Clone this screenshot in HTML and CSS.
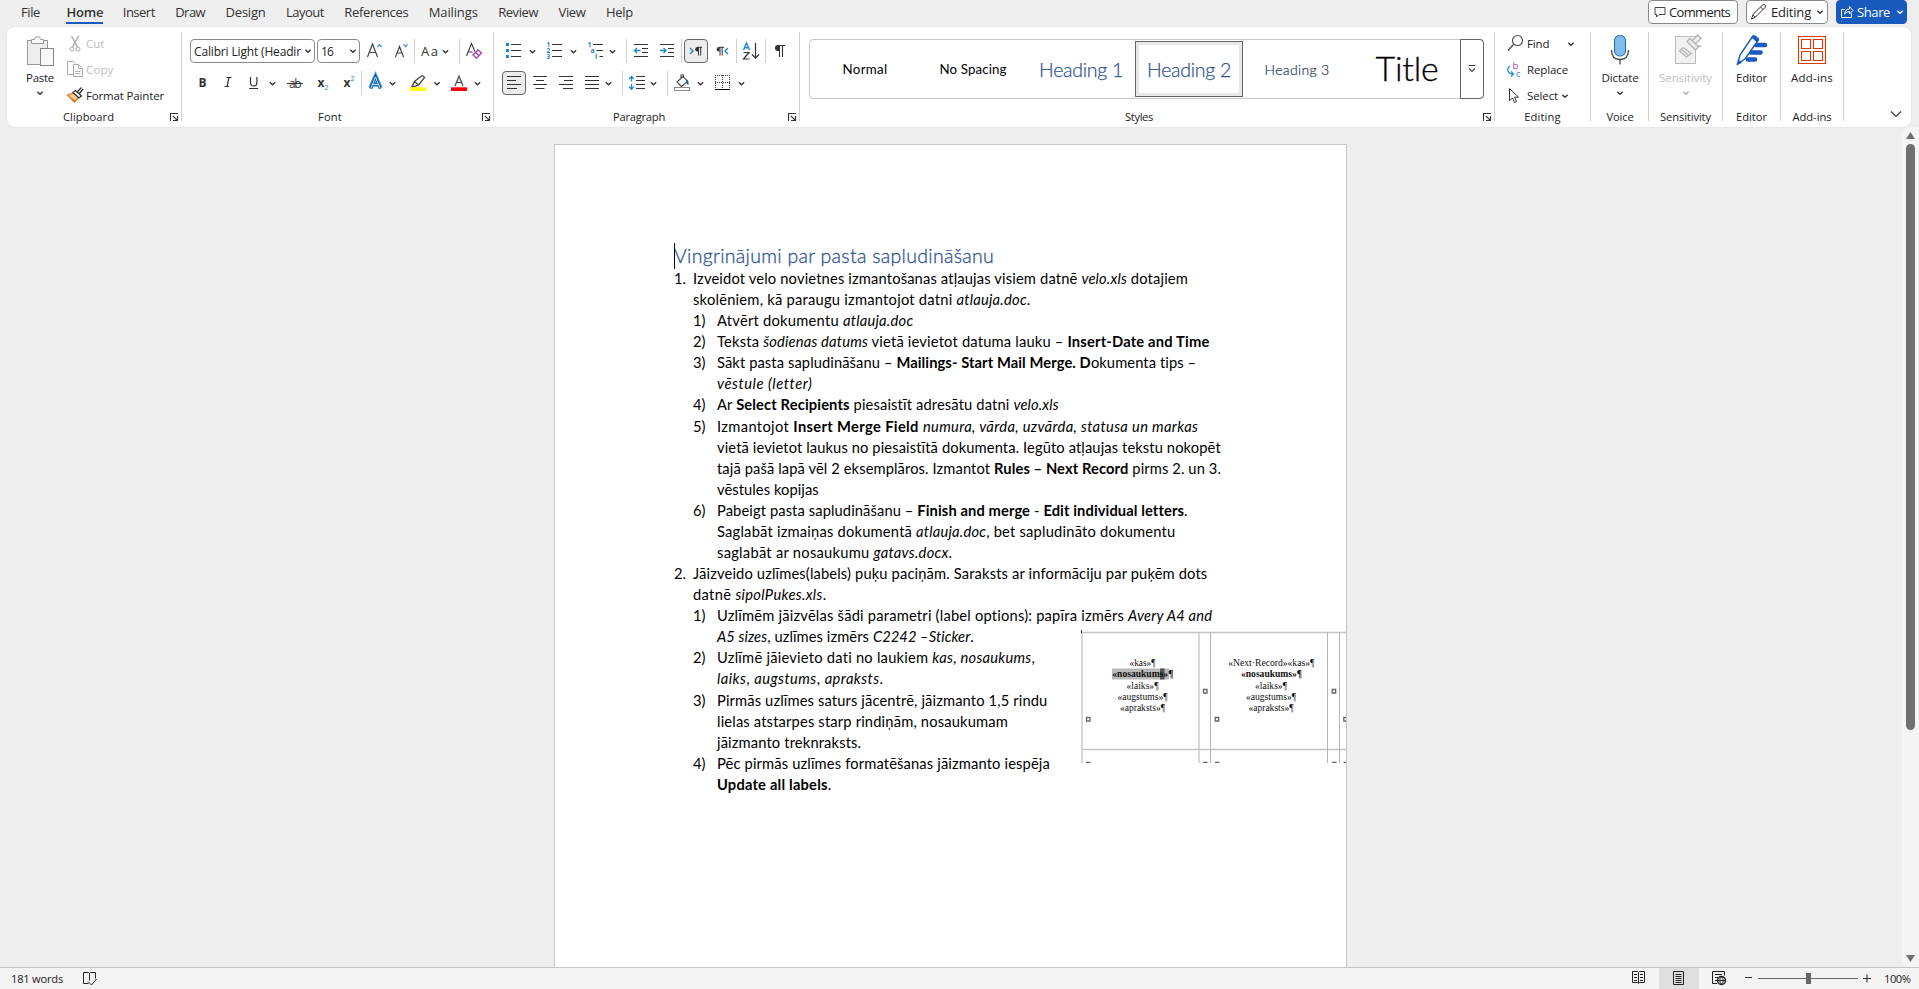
FILE: index.html
```html
<!DOCTYPE html>
<html lang="lv">
<head>
<meta charset="utf-8">
<title>Document</title>
<link rel="stylesheet" href="styles.css">
</head>
<body>
<svg class="defs" width="0" height="0" aria-hidden="true">
  <defs>
    <path id="chev" d="M-2.7-1.3L0 1.3L2.7-1.3" fill="none" stroke="#333" stroke-width="1.3"/>
    <path id="launch" d="M.5 8V.5H8M2.8 2.8L7 7M7.5 3V7.5H3" fill="none" stroke="#333" stroke-width="1.1"/>
  </defs>
</svg>

<header class="tabs">
  <nav class="tablist">
    <a class="tab"><span data-w="19">File</span></a>
    <a class="tab active"><span data-w="37">Home</span></a>
    <a class="tab"><span data-w="32">Insert</span></a>
    <a class="tab"><span data-w="30">Draw</span></a>
    <a class="tab"><span data-w="40">Design</span></a>
    <a class="tab"><span data-w="38">Layout</span></a>
    <a class="tab"><span data-w="64">References</span></a>
    <a class="tab"><span data-w="49">Mailings</span></a>
    <a class="tab"><span data-w="40">Review</span></a>
    <a class="tab"><span data-w="27">View</span></a>
    <a class="tab"><span data-w="27">Help</span></a>
  </nav>
  <div class="actions">
    <button class="action comments"><svg viewBox="1652 4 16 16" width="16" height="16"><path d="M1654 7.5h10v7h-6l-2.5 2.5v-2.500h-1.500z" fill="none" stroke="#444"/></svg><span data-w="61">Comments</span></button>
    <button class="action editing"><svg viewBox="1750 3 18 18" width="18" height="18"><path d="M1751.500 19l1.500-4.500 9.500-9.500q1.500-1 2.500 0t0 2.500l-9.500 9.500zM1760.500 7l2.500 2.500M1753 15l2 2" fill="none" stroke="#333"/></svg><span data-w="40">Editing</span><svg viewBox="-6 -6 12 12" width="12" height="12"><use href="#chev"/></svg></button>
    <button class="action share"><svg viewBox="1839 3 16 18" width="16" height="18"><path d="M1845 9.500h-3.500v8h10v-4M1844.500 14q.5-5 5-5v-2.500l3.500 4-3.500 3.500v-2.500q-3 0-5 2.500z" fill="none" stroke="#fff"/></svg><span data-w="33">Share</span><svg class="light" viewBox="-6 -6 12 12" width="12" height="12"><use href="#chev"/></svg></button>
  </div>
</header>

<section class="ribbon">
  <div class="group clipboard">
    <div class="body">
      <button class="big paste">
        <svg viewBox="25 32 34 36" width="34" height="36"><rect x="29.500" y="40.500" width="20" height="24" fill="#eee" stroke="#999"/><path d="M33.500 43.500v-4h3q0-3 3-3t3 3h3v4z" fill="#fafafa" stroke="#999"/><rect x="42.500" y="48.500" width="13" height="17" fill="#f8f8f8" stroke="#888"/></svg>
        <span data-w="28">Paste</span>
        <svg viewBox="-6 -5 12 10" width="12" height="10"><use href="#chev"/></svg>
      </button>
      <div class="stack">
        <button class="small off"><svg viewBox="65 31 21 26" width="21" height="26"><path d="M71.500 36l6 11M78.500 36l-6 11" stroke="#aaa" stroke-width="1.400" fill="none"/><circle cx="72" cy="49" r="2" fill="none" stroke="#aaa"/><circle cx="78" cy="49" r="2" fill="none" stroke="#aaa"/></svg><span data-w="18.500">Cut</span></button>
        <button class="small off"><svg viewBox="65 57 21 26" width="21" height="26"><path d="M73 74.500h-5.500v-13h6l2 2M73.500 64.500h5l4 4v8h-9zM78.500 64.500v4h4M75.500 71.500h5M75.500 73.500h5" fill="none" stroke="#aaa"/></svg><span data-w="27.500">Copy</span></button>
        <button class="small"><svg viewBox="65 83 21 26" width="21" height="26"><path d="M67.500 95l6-2 5 4.500-4 4.500z" fill="#f9c89a" stroke="#e07b1a" stroke-width="1.300"/><path d="M73 102l2.500-1.500-4-2.500z" fill="#e07b1a"/><path d="M73 92.500l2.500-2 6 5.500-2.500 2zM77.500 91.500l4-4M79.500 93.500l3.500-4.500" fill="#fff" stroke="#333" stroke-width="1.300"/></svg><span data-w="78">Format Painter</span></button>
      </div>
    </div>
    <div class="caption"><span data-w="51">Clipboard</span><svg class="launcher" width="9" height="9"><use href="#launch"/></svg></div>
  </div>

  <div class="group font">
    <div class="body rows">
      <div class="row first">
        <div class="combo name"><span data-w="107">Calibri Light (Headir</span><svg viewBox="-6 -6 12 12" width="12" height="12"><use href="#chev"/></svg></div>
        <div class="combo size"><span data-w="12">16</span><svg viewBox="-6 -6 12 12" width="12" height="12"><use href="#chev"/></svg></div>
        <svg viewBox="361 39 26 24" width="26" height="24"><path d="M367.500 57l5-13 5 13M369.200 52.500h6.600" fill="none" stroke="#444" stroke-width="1.200"/><path d="M377.500 47l2-2.300 2 2.300" fill="none" stroke="#2b88d8" stroke-width="1.200"/></svg>
        <svg viewBox="387 39 27 24" width="27" height="24"><path d="M395.500 57l4-10.500 4 10.500M397 53h5.300" fill="none" stroke="#444" stroke-width="1.200"/><path d="M403.500 44.300l2 2.300 2-2.300" fill="none" stroke="#2b88d8" stroke-width="1.200"/></svg>
        <i class="sep"></i>
        <svg viewBox="415 39 44 24" width="44" height="24"><text x="421" y="56" font-size="13" textLength="17">Aa</text><use href="#chev" x="445.500" y="51.500"/></svg>
        <i class="sep"></i>
        <svg viewBox="460 39 28 24" width="28" height="24"><path d="M466.500 56l5-12.500 3.500 8M468.200 52h4.500" fill="none" stroke="#444" stroke-width="1.200"/><path d="M473 55l5-5 3.500 3-5 5.200zM475.500 52.500l3.500 3.200" fill="#fff" stroke="#a33cae" stroke-width="1.300"/></svg>
      </div>
      <div class="row">
        <svg viewBox="190 71 24 24" width="24" height="24"><text x="198.500" y="87" font-weight="700" font-size="12">B</text></svg>
        <svg viewBox="214 71 26 24" width="26" height="24"><path d="M226.500 77.500h5M224.500 86.500h4.500M229 77.500l-2 9" fill="none" stroke="#333" stroke-width="1.200"/></svg>
        <svg viewBox="240 71 42 24" width="42" height="24"><path d="M250.500 77v5.500q0 3.500 3.200 3.500t3.200-3.500v-5.500M249 88.500h9" fill="none" stroke="#333" stroke-width="1.200"/><use href="#chev" x="272.500" y="83.500"/></svg>
        <svg viewBox="282 71 26 24" width="26" height="24"><text x="289" y="87.500" font-size="12" textLength="12.500" fill="#555">ab</text><path d="M287 83.500h16" stroke="#333"/></svg>
        <svg viewBox="308 71 26 24" width="26" height="24"><text x="317.500" y="86.500" font-size="12" font-weight="700">x</text><text x="324.500" y="90" font-size="7" class="blue">2</text></svg>
        <svg viewBox="334 71 27 24" width="27" height="24"><text x="343.500" y="86.500" font-size="12" font-weight="700">x</text><text x="350.500" y="81" font-size="7" class="blue">2</text></svg>
        <i class="sep"></i>
        <svg viewBox="362 71 42 24" width="42" height="24"><path d="M370.500 88l5-11.500 5 11.500M372.500 84.500h6" fill="none" stroke="#4ba3e3" stroke-width="4.500"/><path d="M370.500 88.500l5-12 5 12M372.500 84.500h6" fill="none" stroke="#0f5aa5" stroke-width="2.600"/><path d="M371 88l4.500-11 4.500 11M372.500 84.500h6" fill="none" stroke="#fff" stroke-width=".8"/><use href="#chev" x="392.500" y="83.500"/></svg>
        <svg viewBox="404 71 41 24" width="41" height="24"><path d="M412 86.500l2.500-5 7-5.500q2-.5 3 1.500l-5.500 7-4 2zM414.500 81.500l4 3.500M412 86.500h3" fill="none" stroke="#444" stroke-width="1.300"/><rect x="410" y="87.300" width="16" height="3.700" fill="#ff0"/><use href="#chev" x="437" y="83.500"/></svg>
        <svg viewBox="445 71 42 24" width="42" height="24"><path d="M455 86l4-10 4 10M456.500 82.500h5" fill="none" stroke="#444" stroke-width="1.200"/><rect x="451" y="87.300" width="16" height="3.700" fill="#f00"/><use href="#chev" x="477.500" y="83.500"/></svg>
      </div>
    </div>
    <div class="caption"><span data-w="24">Font</span><svg class="launcher" width="9" height="9"><use href="#launch"/></svg></div>
  </div>

  <div class="group para">
    <div class="body rows">
      <div class="row first">
        <svg viewBox="502 39 38 24" width="38" height="24"><path d="M506 43h3v3h-3zM506 49h3v3h-3zM506 55h3v3h-3z" fill="#1e88d0"/><path d="M511 44.500h10M511 50.500h10M511 56.500h10" stroke="#333"/><use href="#chev" x="532.500" y="51.500"/></svg>
        <svg viewBox="540 39 41 24" width="41" height="24"><g font-size="6.500" font-weight="700" class="blue"><text x="546.500" y="47">1</text><text x="546.500" y="53">2</text><text x="546.500" y="59">3</text></g><path d="M552 44.500h10M552 50.500h10M552 56.500h10" stroke="#333"/><use href="#chev" x="573.500" y="51.500"/></svg>
        <svg viewBox="581 39 45 24" width="45" height="24"><g font-size="7" font-weight="700" class="blue"><text x="587.500" y="47">1</text><text x="590.500" y="53">a</text><text x="595" y="59">i</text></g><path d="M593 44.500h10M596.500 50.500h6.500M599.500 56.500h3.500" stroke="#333"/><use href="#chev" x="612.500" y="51.500"/></svg>
        <i class="sep"></i>
        <svg viewBox="627 39 27 24" width="27" height="24"><path d="M634 44.500h14M642 48.500h6M642 52.500h6M634 56.500h14" stroke="#333"/><path d="M640.500 50.500h-6M637 48l-2.500 2.500 2.500 2.500" fill="none" stroke="#1e88d0" stroke-width="1.300"/></svg>
        <svg viewBox="654 39 27 24" width="27" height="24"><path d="M660 44.500h14M668 48.500h6M668 52.500h6M660 56.500h14" stroke="#333"/><path d="M660 50.500h6M663.500 48l2.500 2.500-2.500 2.500" fill="none" stroke="#1e88d0" stroke-width="1.300"/></svg>
        <i class="sep"></i>
        <svg class="on ltr" viewBox="684 39 24 24" width="24" height="24"><path d="M690 48l3 3-3 3" fill="none" stroke="#1e88d0" stroke-width="1.400"/><path d="M698 47h-.5a2.300 2.300 0 0 0 0 4.600h.5z" fill="#333"/><path d="M698.500 47v8.500M700.700 47v8.500M697 47.300h5" stroke="#333"/></svg>
        <svg viewBox="709 39 27 24" width="27" height="24"><path d="M728 48l-3 3 3 3" fill="none" stroke="#1e88d0" stroke-width="1.400"/><path d="M719.500 47h-.5a2.300 2.300 0 0 0 0 4.600h.5z" fill="#333"/><path d="M720 47v8.500M722.200 47v8.500M719 47.300h5" stroke="#333"/></svg>
        <i class="sep"></i>
        <svg viewBox="737 39 28 24" width="28" height="24"><path d="M743.500 50l3-7 3 7M744.500 47.700h4" fill="none" stroke="#1e88d0" stroke-width="1.400"/><path d="M743.500 52.500h5.500l-5.500 6.500h6" fill="none" stroke="#333" stroke-width="1.200"/><path d="M755.500 43v15M752 54.500l3.500 3.700 3.500-3.700" fill="none" stroke="#333" stroke-width="1.200"/></svg>
        <i class="sep"></i>
        <svg viewBox="766 39 26 24" width="26" height="24"><path d="M779 45h-1a2.900 2.900 0 0 0 0 6h1z" fill="#333"/><path d="M779.500 45v12M782.500 45v12M778 45.500h7.500" stroke="#333" stroke-width="1.100"/></svg>
      </div>
      <div class="row">
        <svg class="on" viewBox="502 71 24 24" width="24" height="24"><path d="M507 76.500h14M507 80.500h9M507 84.500h14M507 88.500h10" stroke="#333"/></svg>
        <svg viewBox="526 71 27 24" width="27" height="24"><path d="M533 76.500h14M536 80.500h8M533 84.500h14M535.500 88.500h9" stroke="#333"/></svg>
        <svg viewBox="553 71 26 24" width="26" height="24"><path d="M559 76.500h14M564 80.500h9M559 84.500h14M563 88.500h10" stroke="#333"/></svg>
        <svg viewBox="579 71 43 24" width="43" height="24"><path d="M585 76.500h14M585 80.500h14M585 84.500h14M585 88.500h14" stroke="#333"/><use href="#chev" x="608.500" y="83.500"/></svg>
        <i class="sep"></i>
        <svg viewBox="623 71 44 24" width="44" height="24"><path d="M636 76.500h9M636 80.500h9M636 84.500h9M636 88.500h9" stroke="#333"/><path d="M631.500 76.500v5M629.200 79l2.300-2.500 2.300 2.500M631.500 84v5M629.200 86.700l2.300 2.500 2.300-2.500" fill="none" stroke="#1e88d0" stroke-width="1.300"/><use href="#chev" x="653.500" y="83.500"/></svg>
        <i class="sep"></i>
        <svg viewBox="668 71 43 24" width="43" height="24"><path d="M677 82l6-5.500 4.500 5-6 5zM681 78.500v-3.500h2.500v3" fill="none" stroke="#444" stroke-width="1.100"/><path d="M686 79.500q3 0 2.500 5.500-2.500-1-2-3.500z" fill="#185a9d"/><rect x="674.500" y="87.500" width="15" height="3" fill="#fff" stroke="#888"/><use href="#chev" x="700.500" y="83.500"/></svg>
        <svg viewBox="711 71 42 24" width="42" height="24"><path d="M715.500 75v14M722.500 75v14M729.500 75v14M715 75.500h15M715 82.500h15" stroke="#444" stroke-dasharray="1 1"/><path d="M715 89.500h15" stroke="#000"/><use href="#chev" x="741.500" y="83.500"/></svg>
      </div>
    </div>
    <div class="caption"><span data-w="52">Paragraph</span><svg class="launcher" width="9" height="9"><use href="#launch"/></svg></div>
  </div>

  <div class="group styles">
    <div class="body">
      <div class="gallery">
        <div class="item plain"><span data-w="45">Normal</span></div>
        <div class="item plain"><span data-w="67">No Spacing</span></div>
        <div class="item head"><span data-w="84">Heading 1</span></div>
        <div class="item head picked"><span data-w="84">Heading 2</span></div>
        <div class="item h3"><span data-w="65">Heading 3</span></div>
        <div class="item title"><span data-w="63">Title</span></div>
        <div class="more"><svg viewBox="-6 -6 12 12" width="12" height="12"><path d="M-3.500-3.500h7M-3-.5L0 2.300L3-.5" fill="none" stroke="#333" stroke-width="1.100"/></svg></div>
      </div>
    </div>
    <div class="caption"><span data-w="28">Styles</span><svg class="launcher" width="9" height="9"><use href="#launch"/></svg></div>
  </div>

  <div class="group edit">
    <div class="body">
      <div class="stack">
        <button class="small"><svg viewBox="1505 31 22 26" width="22" height="26"><circle cx="1517.500" cy="40.500" r="5" fill="none" stroke="#444" stroke-width="1.100"/><path d="M1513.500 44.500l-5.500 6" stroke="#444" stroke-width="1.200"/></svg><span data-w="22.500">Find</span><svg class="far" viewBox="-6 -6 12 12" width="12" height="12"><use href="#chev"/></svg></button>
        <button class="small"><svg viewBox="1505 57 22 26" width="22" height="26"><text x="1512.500" y="69" font-size="9.500" class="purple">b</text><text x="1516" y="77" font-size="9" class="blue">c</text><path d="M1510 66q-3 2-2 5t5 3M1511 71.500l2.500 2.500-2.500 2.500" fill="none" stroke="#1e88d0" stroke-width="1.200"/></svg><span data-w="41">Replace</span></button>
        <button class="small"><svg viewBox="1505 83 22 26" width="22" height="26"><path d="M1509.500 88.500v12l3-2.500 2 4.500 2-1-2-4.300h4z" fill="#fff" stroke="#333"/></svg><span data-w="31">Select</span><svg viewBox="-6 -6 12 12" width="12" height="12"><use href="#chev"/></svg></button>
      </div>
    </div>
    <div class="caption"><span data-w="36.500">Editing</span></div>
  </div>

  <div class="group voice">
    <button class="big body">
      <svg viewBox="1605 32 30 36" width="30" height="36"><rect x="1614.500" y="35.500" width="11" height="20.500" rx="5" fill="#83bceb" stroke="#1267b4"/><path d="M1611.500 50q0 9.500 8.500 9.500t8.500-9.500M1620 59.500v5" fill="none" stroke="#444" stroke-width="1.300"/></svg>
      <span data-w="37">Dictate</span>
      <svg viewBox="-6 -5 12 10" width="12" height="10"><use href="#chev"/></svg>
    </button>
    <div class="caption"><span data-w="27">Voice</span></div>
  </div>

  <div class="group sens">
    <button class="big body off">
      <svg viewBox="1670 32 32 36" width="32" height="36"><rect x="1675.500" y="36.500" width="20" height="27" fill="#f1f1f1" stroke="#bbb"/><path d="M1679.500 51l3.500-3.500 8.500 6-5 3.500zM1681 49l7 6" fill="#eee" stroke="#b8b8b8" stroke-width="1.300"/><path d="M1687 41.500l3-3 8.500 8.500-3 3zM1692.500 40.500l5-5.500 3.500 3.500-5.500 5M1697 46l4.500 0" fill="#eee" stroke="#b4b4b4" stroke-width="1.400"/></svg>
      <span data-w="53">Sensitivity</span>
      <svg viewBox="-6 -5 12 10" width="12" height="10"><use href="#chev"/></svg>
    </button>
    <div class="caption"><span data-w="51">Sensitivity</span></div>
  </div>

  <div class="group editor">
    <button class="big body">
      <svg viewBox="1735 32 34 36" width="34" height="36"><path d="M1756 45h9M1751 52.500h9.500M1748 59.500h7" stroke="#185abd" stroke-width="4.600" stroke-linecap="round"/><path d="M1737.500 64l2.500-9 12.500-18.500q1-1.300 2.500-.3l2.500 1.800q1.500 1 .5 2.500l-13 18.500z" fill="#fff" stroke="#185abd" stroke-width="1.400"/><path d="M1752 37.500l1.500-1.500 5 3.500-1.500 2.500zM1737.500 64.500l1.200-4 2.600 2z" fill="#185abd" stroke="#185abd"/></svg>
      <span data-w="31">Editor</span>
    </button>
    <div class="caption"><span data-w="31">Editor</span></div>
  </div>

  <div class="group addins">
    <button class="big body">
      <svg viewBox="1795 32 34 36" width="34" height="36"><path d="M1798.500 36.500h27v27h-27zM1801.500 39.500h9v9h-9zM1813.500 39.500h9v9h-9zM1801.500 51.500h9v9h-9zM1813.500 51.500h9v9h-9z" fill="none" stroke="#d83b01" stroke-width="1.100"/></svg>
      <span data-w="42">Add-ins</span>
    </button>
    <div class="caption"><span data-w="39">Add-ins</span></div>
  </div>
  <svg class="collapse" viewBox="-6 -4 12 8" width="12" height="8"><path d="M-5-2.500L0 2.500L5-2.500" fill="none" stroke="#333" stroke-width="1.200"/></svg>
</section>

<main class="workspace">
  <article class="page">
    <i class="caret"></i>
    <h2><span data-w="320">Vingrinājumi par pasta sapludināšanu</span></h2>
    <div class="ln n1"><b class="num">1.</b><span data-w="495">Izveidot velo novietnes izmantošanas atļaujas visiem datnē <em>velo.xls</em> dotajiem</span></div>
    <div class="ln n1"><b class="num"></b><span data-w="337.5">skolēniem, kā paraugu izmantojot datni <em>atlauja.doc</em>.</span></div>
    <div class="ln n2"><b class="num">1)</b><span data-w="196.4">Atvērt dokumentu <em>atlauja.doc</em></span></div>
    <div class="ln n2"><b class="num">2)</b><span data-w="492.4">Teksta <em>šodienas datums</em> vietā ievietot datuma lauku – <strong>Insert-Date and Time</strong></span></div>
    <div class="ln n2"><b class="num">3)</b><span data-w="479.5">Sākt pasta sapludināšanu – <strong>Mailings- Start Mail Merge. D</strong>okumenta tips –</span></div>
    <div class="ln n2"><b class="num"></b><span data-w="94.6"><em>vēstule (letter)</em></span></div>
    <div class="ln n2"><b class="num">4)</b><span data-w="342">Ar <strong>Select Recipients</strong> piesaistīt adresātu datni <em>velo.xls</em></span></div>
    <div class="ln n2"><b class="num">5)</b><span data-w="481.3">Izmantojot <strong>Insert Merge Field</strong> <em>numura, vārda, uzvārda, statusa un markas</em></span></div>
    <div class="ln n2"><b class="num"></b><span data-w="504">vietā ievietot laukus no piesaistītā dokumenta. Iegūto atļaujas tekstu nokopēt</span></div>
    <div class="ln n2"><b class="num"></b><span data-w="504">tajā pašā lapā vēl 2 eksemplāros. Izmantot <strong>Rules – Next Record</strong> pirms 2. un 3.</span></div>
    <div class="ln n2"><b class="num"></b><span data-w="101.8">vēstules kopijas</span></div>
    <div class="ln n2"><b class="num">6)</b><span data-w="470">Pabeigt pasta sapludināšanu – <strong>Finish and merge</strong> - <strong>Edit individual letters</strong>.</span></div>
    <div class="ln n2"><b class="num"></b><span data-w="458.5">Saglabāt izmaiņas dokumentā <em>atlauja.doc</em>, bet sapludināto dokumentu</span></div>
    <div class="ln n2"><b class="num"></b><span data-w="235.3">saglabāt ar nosaukumu <em>gatavs.docx</em>.</span></div>
    <div class="ln n1"><b class="num">2.</b><span data-w="514.3">Jāizveido uzlīmes(labels) puķu paciņām. Saraksts ar informāciju par puķēm dots</span></div>
    <div class="ln n1"><b class="num"></b><span data-w="133.5">datnē <em>sipolPukes.xls</em>.</span></div>
    <div class="ln n2"><b class="num">1)</b><span data-w="495.5">Uzlīmēm jāizvēlas šādi parametri (label options): papīra izmērs <em>Avery A4 and</em></span></div>
    <div class="ln n2"><b class="num"></b><span data-w="256.7"><em>A5 sizes</em>, uzlīmes izmērs <em>C2242 –Sticker</em>.</span></div>
    <div class="ln n2"><b class="num">2)</b><span data-w="318.3">Uzlīmē jāievieto dati no laukiem <em>kas</em>, <em>nosaukums</em>,</span></div>
    <div class="ln n2"><b class="num"></b><span data-w="166.5"><em>laiks</em>, <em>augstums</em>, <em>apraksts</em>.</span></div>
    <div class="ln n2"><b class="num">3)</b><span data-w="330.4">Pirmās uzlīmes saturs jācentrē, jāizmanto 1,5 rindu</span></div>
    <div class="ln n2"><b class="num"></b><span data-w="291">lielas atstarpes starp rindiņām, nosaukumam</span></div>
    <div class="ln n2"><b class="num"></b><span data-w="144.2">jāizmanto treknraksts.</span></div>
    <div class="ln n2"><b class="num">4)</b><span data-w="333">Pēc pirmās uzlīmes formatēšanas jāizmanto iespēja</span></div>
    <div class="ln n2"><b class="num"></b><span data-w="114.3"><strong>Update all labels</strong>.</span></div>

    <svg class="labels" viewBox="1081 629 265 134" width="265" height="134">
      <path d="M1082 632.500h264M1082 749.500h264M1082 632v131M1199 632v131" stroke="#c4c4c4" stroke-width="1.300" fill="none"/>
      <path d="M1210.500 632v131M1327.500 632v131M1339.500 632v131" stroke="#b4b4b4" fill="none"/>
      <path d="M1081.500 630v3" stroke="#333"/>
      <rect x="1112" y="668.500" width="57" height="11" fill="#bababa"/><rect x="1160" y="668.500" width="4.500" height="11" fill="#555"/>
      <g>
        <text x="1129.500" y="666" textLength="26" lengthAdjust="spacingAndGlyphs">«kas»¶</text>
        <text x="1112.300" y="677" textLength="61" lengthAdjust="spacingAndGlyphs" font-weight="700">«nosaukums»¶</text>
        <text x="1126.500" y="689" textLength="32" lengthAdjust="spacingAndGlyphs">«laiks»¶</text>
        <text x="1117.500" y="700" textLength="50" lengthAdjust="spacingAndGlyphs">«augstums»¶</text>
        <text x="1120" y="711" textLength="45" lengthAdjust="spacingAndGlyphs">«apraksts»¶</text>
        <text x="1228.300" y="666" textLength="86" lengthAdjust="spacingAndGlyphs">«Next·Record»«kas»¶</text>
        <text x="1241" y="677" textLength="61" lengthAdjust="spacingAndGlyphs" font-weight="700">«nosaukums»¶</text>
        <text x="1255" y="689" textLength="32" lengthAdjust="spacingAndGlyphs">«laiks»¶</text>
        <text x="1246" y="700" textLength="50" lengthAdjust="spacingAndGlyphs">«augstums»¶</text>
        <text x="1248.500" y="711" textLength="45" lengthAdjust="spacingAndGlyphs">«apraksts»¶</text>
      </g>
      <path d="M1086.500 717.500h3.500v3.500h-3.500zM1203.500 689.500h3.500v3.500h-3.500zM1215.200 717.500h3.500v3.500h-3.500zM1332.200 689.500h3.500v3.500h-3.500zM1343.800 717.500h3.500v3.500h-3.500zM1086 762.500h4.500M1203 762.500h4.500M1215 762.500h4.500M1332 762.500h4.500M1343.500 762.500h4" fill="none" stroke="#666" stroke-width="1.300"/>
    </svg>
  </article>
  <div class="scrollbar">
    <svg width="9" height="7"><path d="M4.500 0L9 7H0z" fill="#707070"/></svg>
    <div class="thumb"></div>
    <svg width="9" height="7"><path d="M4.500 7L9 0H0z" fill="#707070"/></svg>
  </div>
</main>

<footer class="status">
  <span class="words" data-w="52">181 words</span>
  <svg viewBox="82 970 16 18" width="16" height="18"><path d="M88.500 983.500h-5v-11h5l1 1 1-1h5v6M89.500 973.500v7M88 981.500l3.500 3.500 5-6" fill="none" stroke="#222"/></svg>
  <div class="views">
    <svg viewBox="1629 968 30 21" width="30" height="21"><path d="M1632.500 971.500h5l1 1 1-1h5v11h-5l-1 1-1-1h-5zM1638.500 972.500v11M1634 974.500h3M1634 977.500h3M1634 980.500h3M1640 974.500h3M1640 977.500h3M1640 980.500h3" fill="none" stroke="#222"/></svg>
    <svg class="current" viewBox="1659 968 40 21" width="40" height="21"><path d="M1673.500 971.500h10v13h-10zM1675.500 974.500h6M1675.500 976.500h6M1675.500 978.500h6M1675.500 980.500h6M1675.500 982.500h6" fill="none" stroke="#222"/></svg>
    <svg viewBox="1699 968 40 21" width="40" height="21"><path d="M1717 983.500h-4.500v-12h12v4M1715 974.500h7M1715 977.500h3M1715 980.500h2" fill="none" stroke="#222"/><circle cx="1721.500" cy="980.500" r="4" fill="#f4f4f4" stroke="#222" stroke-width="1.500"/><path d="M1717.500 980.500h8M1721.500 976.500q-3.500 4 0 8q3.500-4 0-8z" fill="none" stroke="#222"/></svg>
  </div>
  <svg class="zoom" viewBox="1739 968 140 21" width="140" height="21"><path d="M1745 977.500h7M1863 978.500h8M1867 974.500v8" stroke="#333" stroke-width="1.100"/><path d="M1758 978.500h100" stroke="#666"/><rect x="1806" y="973" width="5" height="11" fill="#666"/></svg>
  <span data-w="26.500">100%</span>
</footer>
<script src="fit.js"></script>
</body>
</html>
```
FILE: styles.css
```css
* { box-sizing: border-box; }
body {
  margin: 0;
  width: 1919px;
  height: 989px;
  overflow: hidden;
  display: flex;
  flex-direction: column;
  background: #efefef;
  font-family: "Open Sans", "Noto Sans", sans-serif;
  font-size: 11.5px;
  color: #222;
}
button { border: 0; background: none; padding: 0; font: inherit; color: inherit; }
svg { display: block; flex: none; }
svg text { fill: #333; }
svg .blue, svg .blue text { fill: #1e88d0; }
svg .purple { fill: #a33cae; }
.defs { position: absolute; }
[data-w] { white-space: nowrap; display: inline-block; flex: none; }

/* tab strip */
.tabs { height: 27px; flex: none; display: flex; justify-content: space-between; padding: 0 12px 0 21px; }
.tablist { display: flex; gap: 20.4px; font-size: 13px; line-height: 25px; color: #333; }
.tab { height: 24px; }
.tab.active { font-weight: 600; margin: 0 -1px 0 6px; border-bottom: 2px solid #185abd; }
.actions { display: flex; gap: 8px; font-size: 13px; }
.action { height: 24px; border: 1px solid #8a8a8a; border-radius: 4px; background: #fff; display: flex; align-items: center; padding-left: 4px; }
.comments { width: 90px; }
.editing { width: 82px; gap: 3px; padding-left: 3px; }
.share { width: 71px; gap: 2px; padding-left: 2px; background: #185abd; border-color: #185abd; color: #fff; }
.share span { margin-right: 2px; }
.light { filter: brightness(0) invert(1); }

/* ribbon */
.ribbon { width: 1904px; height: 100px; flex: none; margin-left: 7px; background: #fff; border-radius: 8px; display: flex; box-shadow: 0 0 2px #d8d8d8; position: relative; z-index: 1; }
.group { display: flex; flex-direction: column; position: relative; }
.group::after { content: ""; position: absolute; right: 0; top: 5px; width: 1px; height: 89px; background: #cfcfcf; }
.body { height: 80px; flex: none; display: flex; }
.caption { height: 20px; line-height: 19px; text-align: center; font-size: 11.2px; }
.launcher { position: absolute; right: 3px; top: 86px; }
.clipboard { width: 175px; }
.clipboard .caption { padding-right: 12px; }
.font { width: 312px; }
.font .caption { padding-right: 16px; }
.para { width: 306px; }
.para .caption { padding-right: 16px; }
.styles { width: 695px; }
.styles .caption { padding-right: 17px; }
.edit { width: 96px; }
.edit .body { padding-left: 10px; }
.edit .caption { padding-right: 1px; }
.voice { width: 58px; }
.sens { width: 74px; padding-right: 1px; }
.editor { width: 58px; padding-right: 1px; }
.addins { width: 63px; padding-right: 1px; }

.big { display: flex; flex-direction: column; align-items: center; width: 100%; padding-top: 5px; }
.big span { line-height: 20px; }
.paste { width: 34px; margin-left: 16px; margin-right: 8px; padding-top: 5px; }
.stack { padding-top: 4px; }
.small { display: flex; align-items: center; height: 26px; width: auto; }
.small span { margin-right: 1px; line-height: 26px; padding-bottom: 1px; }
.small .far { margin-left: 14px; }
.off { color: #bdbdbd; }
.off use { opacity: .4; }

.rows { flex-direction: column; padding: 12px 0 0 8px; gap: 8px; }
.row { display: flex; height: 24px; }
.sep { width: 1px; height: 24px; background: #d0d0d0; flex: none; }
.combo { height: 24px; border: 1px solid #8a8a8a; border-radius: 4px; display: flex; align-items: center; justify-content: space-between; padding: 0 0 0 3px; font-size: 12px; }
.name { width: 125px; margin-right: 2px; }
.size { width: 43px; margin-right: 1px; }
.on { outline: 1px solid #666; outline-offset: -1px; background: #ececec; border-radius: 4px; }
.ltr { margin: 0 -1px 0 2px; }
.row .ltr + svg { margin-left: 2px; }

/* styles gallery */
.gallery { margin: 12px 0 0 9px; width: 675px; height: 60px; border: 1px solid #c8c8c8; border-radius: 4px; display: flex; padding-left: 1px; }
.item { width: 108px; margin: 1px 0; display: flex; align-items: center; justify-content: center; font-family: Lato, sans-serif; color: #000; }
.plain { font-size: 13.3px; }
.head { font-size: 19.5px; font-weight: 300; color: #2f5496; -webkit-text-stroke: .25px #2f5496; }
.picked { border: 1px solid #666; box-shadow: inset 0 0 0 3px #e8e8e8; }
.h3 { font-size: 14px; font-weight: 300; color: #1f3763; -webkit-text-stroke: .2px #1f3763; }
.title { font-size: 34px; font-weight: 300; padding-left: 4px; -webkit-text-stroke: .3px #000; }
.title span { padding-bottom: 4px; }
.more { margin: -1px -1px -1px auto; width: 24px; border: 1px solid #666; border-radius: 0 4px 4px 0; display: flex; align-items: center; justify-content: center; }
.collapse { margin: 83px 0 0 46px; }

/* document */
.workspace { height: 840px; flex: none; display: flex; justify-content: space-between; overflow: hidden; }
.page { position: relative; margin: 17px 0 0 554px; width: 793px; height: 900px; background: #fff; border: 1px solid #c6c6c6; padding: 98px 0 0 119px; font-family: Lato, sans-serif; font-size: 14.7px; color: #000; overflow: hidden; }
.page h2 { margin: 0; font-size: 19.5px; font-weight: 300; line-height: 26px; height: 25px; color: #2f5496; -webkit-text-stroke: .3px #2f5496; }
.caret { position: absolute; left: 119px; top: 98px; width: 1px; height: 26px; background: #000; }
.ln { display: flex; height: 21.09px; line-height: 21.09px; }
.num { font-weight: 400; }
.n1 .num { width: 19px; }
.n2 { padding-left: 19px; }
.n2 .num { width: 24px; }
.labels { position: absolute; left: 526px; top: 484px; font-family: "Liberation Serif", serif; font-size: 10px; }
.labels text { fill: #111; }

.scrollbar { width: 17px; height: 840px; background: #f5f5f5; border-radius: 8px 0 0 8px; padding: 5px 0 0 0; display: flex; flex-direction: column; align-items: center; }
.thumb { width: 9px; height: 586px; margin: 5px 0 225px; border-radius: 4.5px; background: #707070; }

/* status bar */
.status { height: 22px; border-top: 1px solid #c6c6c6; background: #f4f4f4; display: flex; align-items: center; padding-left: 11px; font-size: 11.2px; flex: none; }
.words { margin-right: 19px; }
.views { display: flex; margin-left: 1531px; }
.current { background: #dedede; }
.zoom { margin-right: 5px; }
```
FILE: fit.js
```js
// Tracks each text run so that it occupies the width stated in data-w.
document.querySelectorAll('[data-w]').forEach(function (el) {
  var natural = el.getBoundingClientRect().width;
  var target = parseFloat(el.dataset.w);
  el.style.letterSpacing = ((target - natural) / el.textContent.length).toFixed(3) + 'px';
});
```
